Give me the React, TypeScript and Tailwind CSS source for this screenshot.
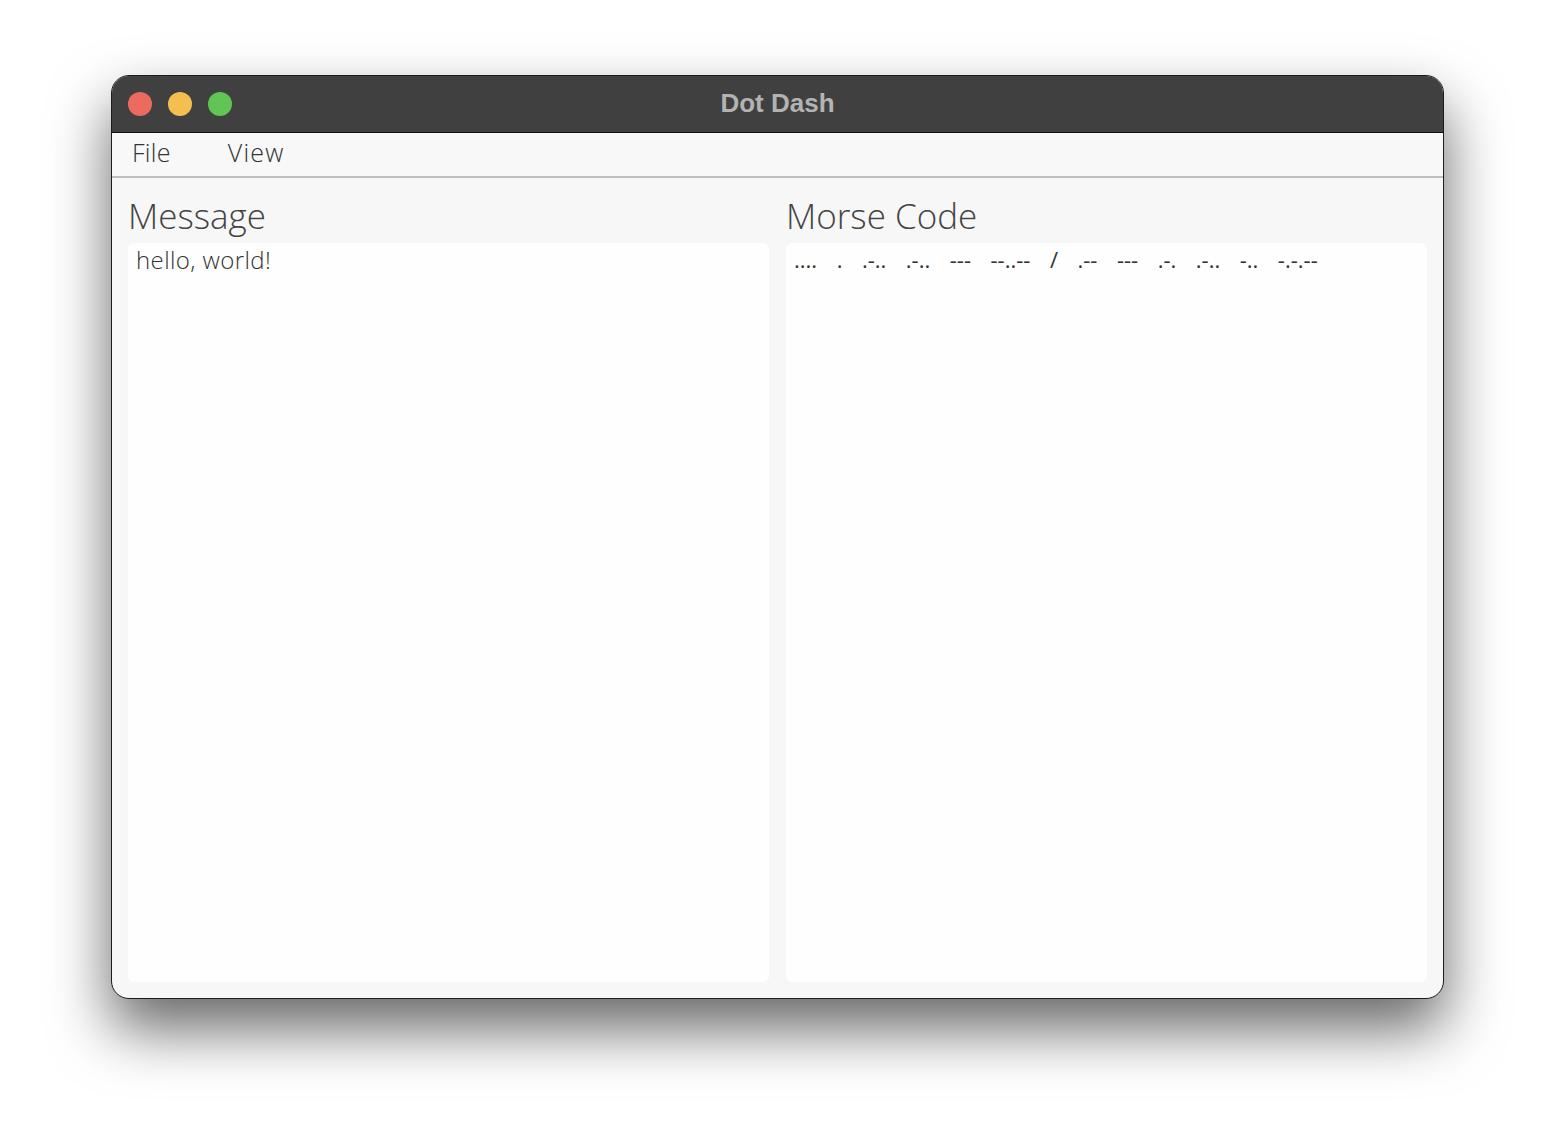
import React from "react";

const MORSE = ".... . .-.. .-.. --- --..-- / .-- --- .-. .-.. -.. -.-.--".split(" ");

function TrafficLights() {
  return (
    <div className="absolute left-[16px] top-[16px] flex gap-[16px]">
      <span className="h-[24px] w-[24px] rounded-full bg-[#ed6a5e]" />
      <span className="h-[24px] w-[24px] rounded-full bg-[#f5bf4f]" />
      <span className="h-[24px] w-[24px] rounded-full bg-[#61c554]" />
    </div>
  );
}

function Panel({ title, children }: { title: string; children: React.ReactNode }) {
  return (
    <div className="flex min-w-0 flex-1 flex-col">
      <h2 className="h-[65px] pt-[16px] text-[35px] font-light leading-[44px] text-[#444]">
        {title}
      </h2>
      <div className="flex-1 rounded-[6px] bg-[#fefefe] px-[8px] pt-[2px]">{children}</div>
    </div>
  );
}

export default function App() {
  return (
    <div className="min-h-[1146px] bg-white pl-[111px] pt-[75px]" style={{ fontFamily: '"Open Sans", "Noto Sans", sans-serif' }}>
      <div className="flex h-[924px] w-[1333px] flex-col overflow-hidden rounded-[18px] border border-[#1c1c1c] bg-[#f7f7f7] shadow-[0_30px_60px_rgba(0,0,0,0.6)]">
        <div className="relative flex h-[57px] shrink-0 items-center justify-center border-b border-[#111] bg-[#404040] pb-[2px]">
          <TrafficLights />
          <span
            className="text-[26px] font-bold text-[#b3b3b3]"
            style={{ fontFamily: '"Liberation Sans", Arial, sans-serif' }}
          >
            Dot Dash
          </span>
        </div>
        <div className="flex h-[45px] shrink-0 items-center gap-[57px] border-b-2 border-[#c0c0c0] bg-[#f8f8f8] px-[20px] pb-[3px] text-[25px] font-light text-[#333]">
          <span className="tracking-[0.3px]">File</span>
          <span className="tracking-[1.2px]">View</span>
        </div>
        <div className="flex flex-1 gap-[17px] px-[16px] pb-[16px]">
          <Panel title="Message">
            <div className="text-[24px] font-light leading-[30px] tracking-[0.4px] text-[#333]">hello, world!</div>
          </Panel>
          <Panel title="Morse Code">
            <div className="flex gap-[19.5px] text-[22px] leading-[28px] text-[#333]">
              {MORSE.map((m, i) => (
                <span key={i}>{m}</span>
              ))}
            </div>
          </Panel>
        </div>
      </div>
    </div>
  );
}
